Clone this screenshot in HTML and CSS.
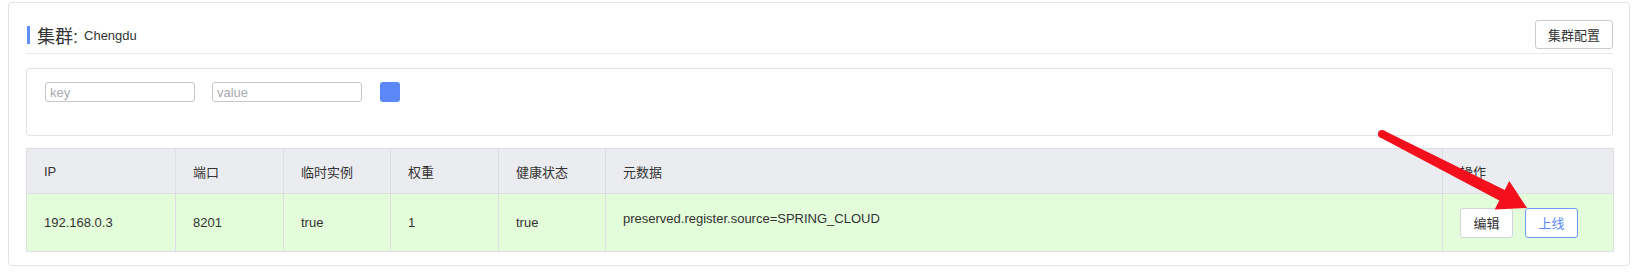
FILE: index.html
```html
<!DOCTYPE html>
<html lang="zh-CN">
<head>
    <meta charset="UTF-8">
    <title>集群 - Chengdu</title>
    <link rel="stylesheet" href="styles.css">
</head>
<body>

<div class="cluster-card">
    <div class="cluster-head">
        <div class="cluster-title">
            <span class="title-mark"></span>
            <span class="title-main">集群:</span>
            <span class="title-name">Chengdu</span>
        </div>
        <button class="btn btn-config">集群配置</button>
    </div>

    <div class="filter-box">
        <input type="text" class="filter-input" placeholder="key">
        <input type="text" class="filter-input" placeholder="value">
        <button class="btn-add"></button>
    </div>

    <table class="instance-table">
        <colgroup>
            <col class="c-ip">
            <col class="c-port">
            <col class="c-eph">
            <col class="c-weight">
            <col class="c-health">
            <col class="c-meta">
            <col class="c-op">
        </colgroup>
        <thead>
            <tr>
                <th>IP</th>
                <th>端口</th>
                <th>临时实例</th>
                <th>权重</th>
                <th>健康状态</th>
                <th>元数据</th>
                <th>操作</th>
            </tr>
        </thead>
        <tbody>
            <tr>
                <td>192.168.0.3</td>
                <td>8201</td>
                <td>true</td>
                <td>1</td>
                <td>true</td>
                <td class="meta-cell">preserved.register.source=SPRING_CLOUD</td>
                <td>
                    <div class="op-buttons">
                        <button class="btn btn-small">编辑</button>
                        <button class="btn btn-small btn-online">上线</button>
                    </div>
                </td>
            </tr>
        </tbody>
    </table>
</div>

<!-- annotation arrow drawn over the page -->
<svg class="arrow" width="1634" height="280" viewBox="0 0 1634 280">
    <circle cx="1382" cy="134" r="4" fill="#f40f1d"/>
    <polygon fill="#f40f1d" points="1380.2,137.6 1383.8,130.4 1504.7,189.9 1509.3,180.9 1527,208 1494.7,209.5 1499.3,200.5"/>
</svg>

</body>
</html>
```

FILE: styles.css
```css
body, html {
    margin: 0;
}
body {
    padding: 2px 4px 0 8px;
    font-family: "Liberation Sans", "Noto Sans CJK SC", sans-serif;
    font-size: 13px;
    color: #333;
    background: #fff;
}
.cluster-card {
    border: 1px solid #e1e3e8;
    border-radius: 4px;
    padding: 17px 16px 13px 17px;
}
.cluster-head {
    display: flex;
    justify-content: space-between;
    align-items: center;
    padding-bottom: 4px;
    border-bottom: 1px solid #e9e9ec;
}
.cluster-title {
    display: flex;
    align-items: center;
    height: 29px;
}
.title-mark {
    display: inline-block;
    width: 3px;
    height: 18px;
    background: #5b8ff9;
    margin-left: 1px;
    margin-right: 7px;
}
.title-main {
    font-size: 18px;
    color: #333;
}
.title-name {
    font-size: 13px;
    color: #333;
    margin-left: 6px;
    margin-top: 2px;
}
.btn {
    font-family: inherit;
    font-size: 13px;
    color: #333;
    background: #fff;
    border: 1px solid #c9ccd3;
    border-radius: 3px;
    cursor: pointer;
    padding: 0;
}
.btn-config {
    width: 78px;
    height: 29px;
}
.filter-box {
    margin-top: 14px;
    height: 68px;
    border: 1px solid #e2e3e7;
    border-radius: 3px;
    box-sizing: border-box;
    padding: 13px 18px 0;
    display: flex;
    align-items: flex-start;
    gap: 17px;
}
.filter-input {
    width: 150px;
    height: 20px;
    box-sizing: border-box;
    border: 1px solid #c4c7ce;
    border-radius: 3px;
    padding: 0 4px;
    font-family: inherit;
    font-size: 13px;
    color: #333;
}
.filter-input::placeholder {
    color: #a8abb2;
}
.btn-add {
    width: 20px;
    height: 20px;
    margin-left: 1px;
    border: none;
    border-radius: 3px;
    background: #5b87f8;
    padding: 0;
}
.instance-table {
    margin-top: 12px;
    width: 1587px;
    border-collapse: collapse;
    table-layout: fixed;
}
.c-ip { width: 149px; }
.c-port { width: 108px; }
.c-eph { width: 107px; }
.c-weight { width: 108px; }
.c-health { width: 107px; }
.c-meta { width: 837px; }
.c-op { width: 171px; }
.instance-table th,
.instance-table td {
    border: 1px solid #dcdee4;
    text-align: left;
    font-weight: normal;
    padding: 0 17px;
    color: #333;
}
.instance-table th {
    height: 44px;
    background: #ebecf0;
}
.instance-table td {
    height: 57px;
    background: #e3fcda;
}
.instance-table td.meta-cell {
    vertical-align: top;
    padding-top: 17px;
    line-height: 16px;
    box-sizing: border-box;
}
.op-buttons {
    display: flex;
    gap: 12px;
}
.btn-small {
    width: 53px;
    height: 30px;
    border-color: #d3d5da;
}
.btn-online {
    color: #5a8cf2;
    border-color: #6b9cf6;
}
.arrow {
    position: absolute;
    top: 0;
    left: 0;
    pointer-events: none;
}
```
